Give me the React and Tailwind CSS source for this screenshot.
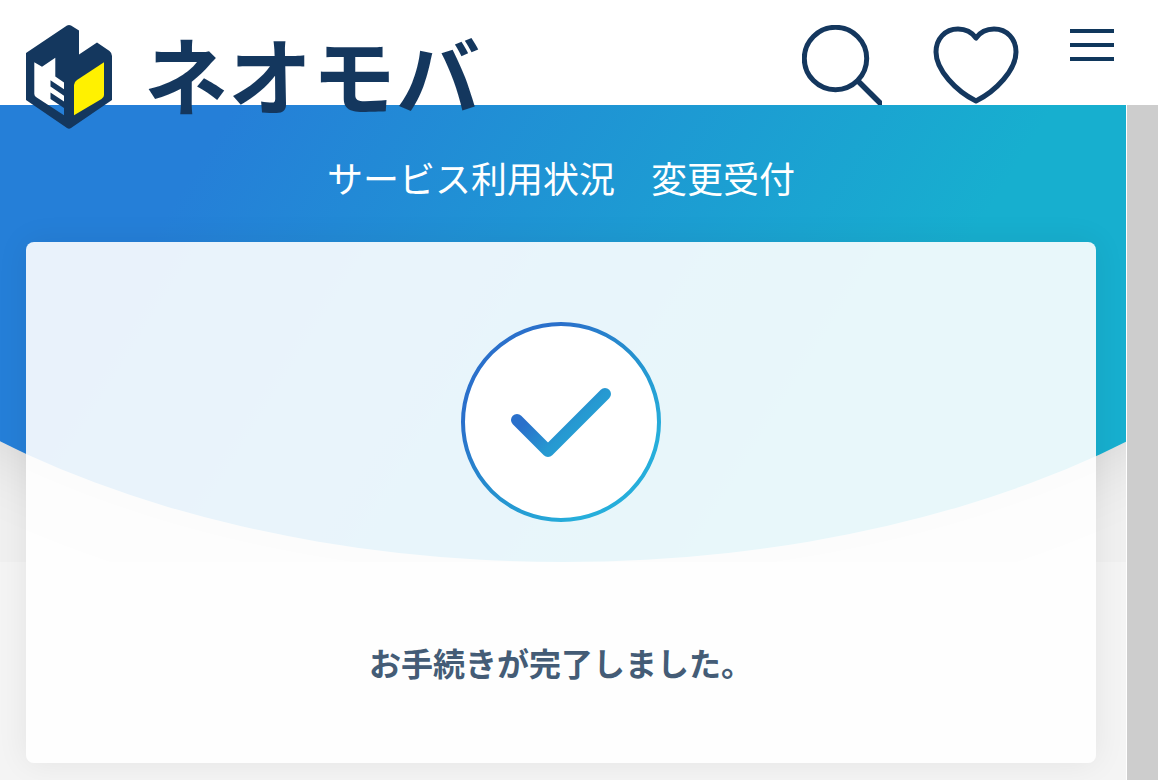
import React from "react";

const LogoMark = () => (
  <svg viewBox="0 0 86 104" className="h-26 w-[86px] shrink-0" aria-hidden="true">
    {/* Block with the left face cut out */}
    <path
      fillRule="evenodd"
      fill="#14375e"
      d="M41 0.5 Q43 -0.5 45 0.5 L53 5.6 V29.5 L71 17.5 L83.5 26 Q86 28 86 31 V75 L45 103 Q43 104.5 41 103 L0 75 V28 Z
         M8.3 37.3 L16 41.7 L29.3 32.7 V51.5 L38 57.5 V64.3 L24.5 55.3 V61.5 L38 70.7 V76.5 L24.5 67.5 V74 L38 83 V90.3 L10.7 72.5 Q8.3 71 8.3 69 Z"
    />
    <path d="M78 37.3 V70 Q78 72.5 75.5 74 L48 90.3 V60 Q48 57 51 55 Z" fill="#fff100" />
  </svg>
);

const Header = () => (
  <header className="relative z-10 flex h-[105px] items-start justify-between bg-white pt-[25px] pr-11 pl-[26px] text-[#14375e]">
    <a href="#" className="flex items-start gap-8">
      <LogoMark />
      <span className="pt-1 text-[84px] leading-[88px] font-bold whitespace-nowrap">
        ネオモバ
      </span>
    </a>

    <nav className="flex items-start">
      <button type="button" aria-label="検索" className="mr-[50px]">
        <svg viewBox="0 0 80 80" className="size-20" fill="none" stroke="currentColor" strokeWidth="5">
          <circle cx="33.5" cy="33.5" r="31.2" />
          <path d="M55.5 55.5 L82 82" strokeWidth="5.5" />
        </svg>
      </button>
      <button type="button" aria-label="お気に入り" className="mr-[50px]">
        <svg viewBox="0 0 88 80" className="h-20 w-[88px]" fill="none" stroke="currentColor" strokeWidth="5" strokeLinejoin="round">
          <path d="M44 13 C39 6 33 4 26 4 C13 4 4 14 4 27 C4 45 24 66 44 76 C64 66 84 45 84 27 C84 14 75 4 62 4 C55 4 49 6 44 13 Z" />
        </svg>
      </button>
      <button type="button" aria-label="メニュー" className="flex flex-col gap-2.5 pt-1">
        <span className="h-1 w-11 bg-[#10375c]"></span>
        <span className="h-1 w-11 bg-[#10375c]"></span>
        <span className="h-1 w-11 bg-[#10375c]"></span>
      </button>
    </nav>
  </header>
);

const CheckIcon = () => (
  <svg viewBox="0 0 200 200" className="size-50" fill="none" aria-hidden="true">
    <defs>
      <linearGradient id="ring" x1="30" y1="30" x2="170" y2="170" gradientUnits="userSpaceOnUse">
        <stop offset="0.15" stopColor="#2a70cb" />
        <stop offset="0.5" stopColor="#258fce" />
        <stop offset="0.9" stopColor="#26aedb" />
      </linearGradient>
      <linearGradient id="tick" x1="60" y1="70" x2="130" y2="140" gradientUnits="userSpaceOnUse">
        <stop offset="0.25" stopColor="#2a70cb" />
        <stop offset="0.6" stopColor="#2699d1" />
        <stop offset="1" stopColor="#26aadb" />
      </linearGradient>
    </defs>
    <circle cx="100" cy="100" r="98" fill="white" stroke="url(#ring)" strokeWidth="4" />
    <path
      d="M56 98 L87 129 L144 72"
      stroke="url(#tick)"
      strokeWidth="12"
      strokeLinecap="round"
      strokeLinejoin="round"
    />
  </svg>
);

const App = () => {
  return (
    <div
      lang="ja"
      className="flex min-h-screen flex-col bg-white font-['Noto_Sans_CJK_JP',sans-serif]"
    >
      <Header />

      <div className="flex flex-1">
        <main className="relative flex-1 bg-[#f4f4f4] pr-[30px] pb-[17px] pl-[26px]">
          {/* Curved backdrop behind the card */}
          <div className="absolute inset-x-0 top-0 h-[457px] overflow-hidden bg-[#f0f0f0]">
            <div className="absolute bottom-0 -left-1/4 h-[946px] w-[150%] rounded-[50%] bg-linear-[122deg,#257fd8_36%,#17afcf_72%] shadow-[0_0_80px_rgba(0,0,0,0.12)]"></div>
          </div>

          <div className="relative">
            <h1 className="pt-[46px] pb-[38px] text-center text-4xl leading-[53px] font-normal text-white">
              サービス利用状況　変更受付
            </h1>
            <section className="flex flex-col items-center rounded-lg bg-white/90 pt-20 pb-[77px] shadow-[0_0_32px_rgba(0,30,20,0.07)]">
              <CheckIcon />
              <p className="pt-[116px] text-[32px] leading-12 font-bold text-[#445c76]">
                お手続きが完了しました。
              </p>
            </section>
          </div>
        </main>

        <div className="ml-px w-[31px] bg-[#cdcdcd]"></div>
      </div>
    </div>
  );
};

export default App;
